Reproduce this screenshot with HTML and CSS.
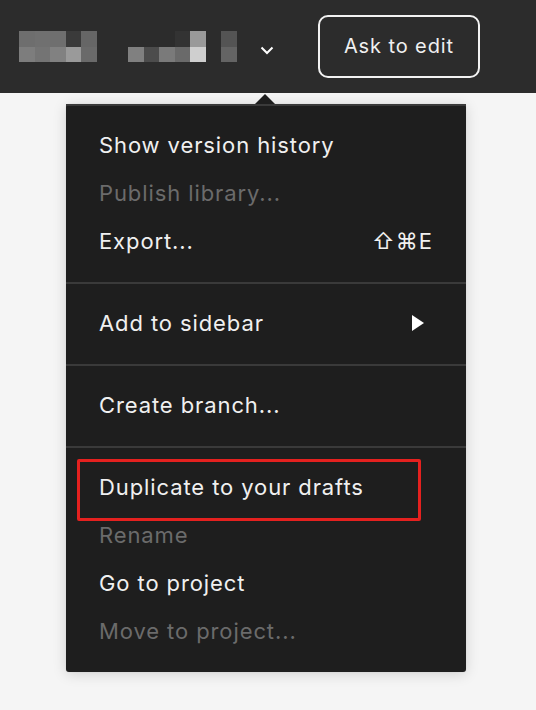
FILE: index.html
```html
<!DOCTYPE html>
<html>
<head>
<meta charset="utf-8">
<link rel="stylesheet" href="styles.css">
</head>
<body>
<header class="topbar">
  <div class="title">
    <div class="pix pix-a">
      <span style="background:#6e6e6e"></span><span style="background:#707070"></span><span style="background:#6f6f6f"></span><span style="background:#3a3a3a"></span><span style="background:#666"></span>
      <span style="background:#7d7d7d"></span><span style="background:#747474"></span><span style="background:#818181"></span><span style="background:#9a9a9a"></span><span style="background:#6a6a6a"></span>
    </div>
    <div class="pix pix-b">
      <span style="background:transparent"></span><span style="background:transparent"></span><span style="background:transparent"></span><span style="background:#333"></span><span style="background:#9a9a9a"></span>
      <span style="background:#808080"></span><span style="background:#4c4c4c"></span><span style="background:#7a7a7a"></span><span style="background:#6a6a6a"></span><span style="background:#cfcfcf"></span>
    </div>
    <div class="pix pix-c">
      <span style="background:#545454"></span>
      <span style="background:#646464"></span>
    </div>
    <svg class="chev" width="14" height="9" viewBox="0 0 14 9"><path d="M1.5 1.5 L7 7 L12.5 1.5" fill="none" stroke="#fff" stroke-width="2"/></svg>
  </div>
  <button class="ask">Ask to edit</button>
</header>
<main class="canvas">
  <div class="menu">
    <div class="caret"></div>
    <div class="section">
      <div class="item">Show version history</div>
      <div class="item disabled">Publish library...</div>
      <div class="item">Export...<span class="shortcut">⇧⌘E</span></div>
    </div>
    <div class="section">
      <div class="item">Add to sidebar<svg class="sub" width="12" height="16" viewBox="0 0 12 16"><path d="M0 0 L12 8 L0 16 Z" fill="#fff"/></svg></div>
    </div>
    <div class="section">
      <div class="item">Create branch...</div>
    </div>
    <div class="section">
      <div class="item highlight">Duplicate to your drafts</div>
      <div class="item disabled">Rename</div>
      <div class="item">Go to project</div>
      <div class="item disabled">Move to project...</div>
    </div>
  </div>
</main>
</body>
</html>
```

FILE: styles.css
```css
* { box-sizing: border-box; }
html, body {
  margin: 0;
  padding: 0;
  background: #f5f5f5;
  font-family: Inter, "Noto Sans", sans-serif;
  width: 536px;
  height: 710px;
  overflow: hidden;
}
.topbar {
  height: 93px;
  background: #2c2c2c;
  display: flex;
  align-items: center;
  padding-left: 19px;
}
.title {
  display: flex;
  align-items: center;
  height: 31px;
}
.pix {
  display: grid;
  grid-auto-rows: 15.5px;
  height: 31px;
}
.pix-a { grid-template-columns: repeat(5, 15.6px); }
.pix-b { grid-template-columns: repeat(5, 15.6px); margin-left: 31px; }
.pix-c { grid-template-columns: 16px; margin-left: 15px; }
.chev { margin-left: 23px; margin-top: 8px; }
.ask {
  margin-left: 44px;
  width: 162px;
  height: 63px;
  border: 2px solid #f2f2f2;
  border-radius: 10px;
  background: transparent;
  color: #f0f0f0;
  font-family: Inter, "Noto Sans", sans-serif;
  font-size: 20px;
  letter-spacing: 0.9px;
  padding: 0 0 2px;
}
.canvas {
  position: relative;
  height: 617px;
}
.menu {
  position: absolute;
  left: 66px;
  top: 11px;
  width: 400px;
  background: #1e1e1e;
  border-radius: 3px;
  box-shadow: 0 2px 14px rgba(0,0,0,0.15), 0 0 1px rgba(0,0,0,0.2);
  color: #f0f0f0;
  font-size: 22px;
  letter-spacing: 0.9px;
}
.caret {
  position: absolute;
  top: -10px;
  left: 189px;
  width: 0;
  height: 0;
  border-left: 10px solid transparent;
  border-right: 10px solid transparent;
  border-bottom: 10px solid #1e1e1e;
}
.section {
  padding: 16px 0;
  border-top: 2px solid #3a3a3a;
}
.section:first-of-type { border-top: none; }
.item {
  position: relative;
  height: 48px;
  display: flex;
  align-items: center;
  padding: 0 33px 3px;
  white-space: nowrap;
}
.item.disabled { color: #6b6b6b; }
.shortcut {
  margin-left: auto;
  letter-spacing: 1px;
}
.sub { margin-left: auto; margin-right: 9px; }
.highlight::after {
  content: "";
  position: absolute;
  left: 11px;
  top: -5px;
  width: 338px;
  height: 56px;
  border: 3px solid #e5211f;
  border-radius: 2px;
}
```
